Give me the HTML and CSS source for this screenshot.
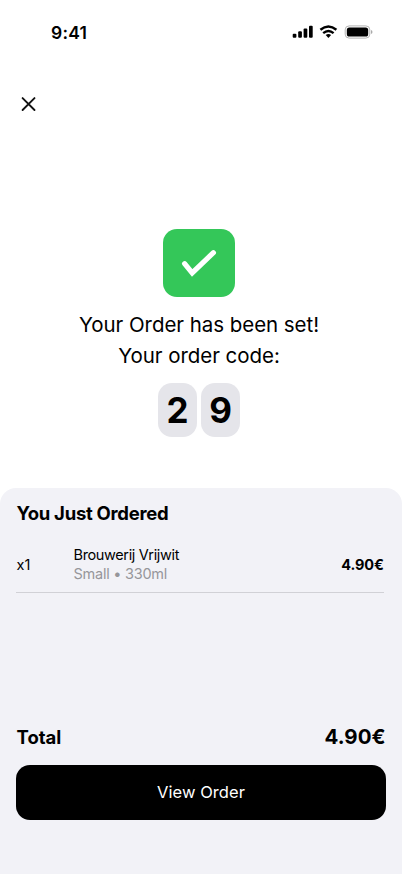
FILE: index.html
```
<!DOCTYPE html>
<html lang="en">
<head>
<meta charset="utf-8">
<title>Order confirmation</title>
<link rel="stylesheet" href="styles.css">
</head>
<body>
<div class="screen">
  <header class="status">
    <span class="time">9:41</span>
    <svg class="indicators" width="82" height="16" viewBox="0 0 82 16">
      <rect x=".7" y="9.7" width="3.7" height="4.1" rx="1"/>
      <rect x="6.2" y="7.2" width="3.7" height="6.6" rx="1"/>
      <rect x="11.6" y="4.4" width="3.7" height="9.4" rx="1"/>
      <rect x="17" y="1.8" width="3.7" height="12" rx="1"/>
      <g fill="none" stroke="#000" stroke-width="2.4">
        <path d="M28.4 5.8Q36.4-.8 44.4 5.8"/>
        <path d="M31.2 9.1Q36.4 4.7 41.6 9.1"/>
      </g>
      <path d="M33.7 11.1Q36.4 9 39.1 11.1L36.4 13.9Z"/>
      <rect x="53.2" y="1.9" width="24.6" height="12.2" rx="3.9" fill="none" stroke="#b3b3b3"/>
      <rect x="54.8" y="3.4" width="21.4" height="9.2" rx="2.6"/>
      <path d="M79 6v4q1.5-.6 1.5-2t-1.5-2Z" fill="#aaa"/>
    </svg>
  </header>
  <nav class="nav">
    <svg width="17" height="16" viewBox="0 0 17 16" fill="none" stroke="#111" stroke-width="1.9" stroke-linecap="round"><path d="M2.6 2.1 14.5 14M14.5 2.1 2.6 14"/></svg>
  </nav>
  <main class="confirm">
    <div class="tile">
      <svg width="72" height="68" viewBox="0 0 72 68" fill="none" stroke="#fff" stroke-width="5.2" stroke-linecap="round"><path d="M21.6 34.7 29.2 43.9 50.4 23.7" stroke-linejoin="miter"/></svg>
    </div>
    <p class="message">Your Order has been set!</p>
    <p class="message second">Your order code:</p>
    <div class="code"><span>2</span><span>9</span></div>
  </main>
  <section class="sheet">
    <h2 class="heading">You Just Ordered</h2>
    <div class="item">
      <span class="qty">x1</span>
      <div class="product"><div class="name">Brouwerij Vrijwit</div><div class="detail">Small • 330ml</div></div>
      <span class="price">4.90€</span>
    </div>
    <div class="total"><span class="label">Total</span><span class="amount">4.90€</span></div>
    <button class="view">View Order</button>
  </section>
</div>
</body>
</html>
```
FILE: styles.css
```
* { box-sizing: border-box; }
body { margin: 0; background: #fff; color: #000; font-family: Inter, "Liberation Sans", sans-serif; }
.screen { width: 402px; height: 874px; display: flex; flex-direction: column; overflow: hidden; }
.status { height: 64px; padding: 0 28px 0 51px; display: flex; align-items: center; justify-content: space-between; }
.time { font-size: 17.5px; font-weight: 600; line-height: 22px; margin-top: 2px; letter-spacing: .25px; }
.nav { height: 165px; padding: 32px 20px 0; }
.nav svg { display: block; }
.confirm { height: 258.5px; width: 398px; display: flex; flex-direction: column; align-items: center; }
.tile { width: 72px; height: 68px; border-radius: 14px; background: #34c759; }
.tile svg { display: block; }
.message { margin: 13px 0 0; font-size: 20.5px; line-height: 30px; letter-spacing: -.05px; white-space: nowrap; }
.second { margin-top: 1px; }
.code { display: flex; gap: 4px; margin-top: 12px; }
.code span { width: 39px; height: 54px; border-radius: 14px; background: #e5e5ea; font-size: 35px; font-weight: 700; line-height: 54px; text-align: center; }
.sheet { flex: 1; border-radius: 16px 16px 0 0; background: #f2f2f7; padding: 13px 16px 54px; display: flex; flex-direction: column; }
.heading { margin: 0 0 0 .5px; font-size: 18.5px; font-weight: 700; line-height: 24px; letter-spacing: -.28px; }
.item { width: 368px; height: 57px; margin-top: 11.5px; padding-top: 1px; display: flex; align-items: center; border-bottom: 1px solid #d1d1d6; font-size: 14.5px; line-height: 18.5px; }
.qty { width: 57.5px; padding-left: .5px; margin-top: 1px; }
.product { flex: 1; }
.name { letter-spacing: -.36px; }
.detail { color: #96969a; letter-spacing: -.25px; }
.price { font-weight: 700; letter-spacing: -.15px; margin-top: 1px; padding-right: .3px; }
.total { margin-top: auto; width: 369.5px; padding-left: .5px; display: flex; justify-content: space-between; align-items: center; line-height: 28px; font-weight: 700; }
.label { font-size: 18.5px; margin-top: 1px; }
.amount { font-size: 20.5px; margin-top: 1px; }
.view { width: 370px; height: 55px; margin-top: 14.5px; flex: none; border: 0; border-radius: 14px; background: #000; color: #fff; font: 400 16.5px/55px Inter, "Liberation Sans", sans-serif; letter-spacing: .05px; padding: 0; }
```
